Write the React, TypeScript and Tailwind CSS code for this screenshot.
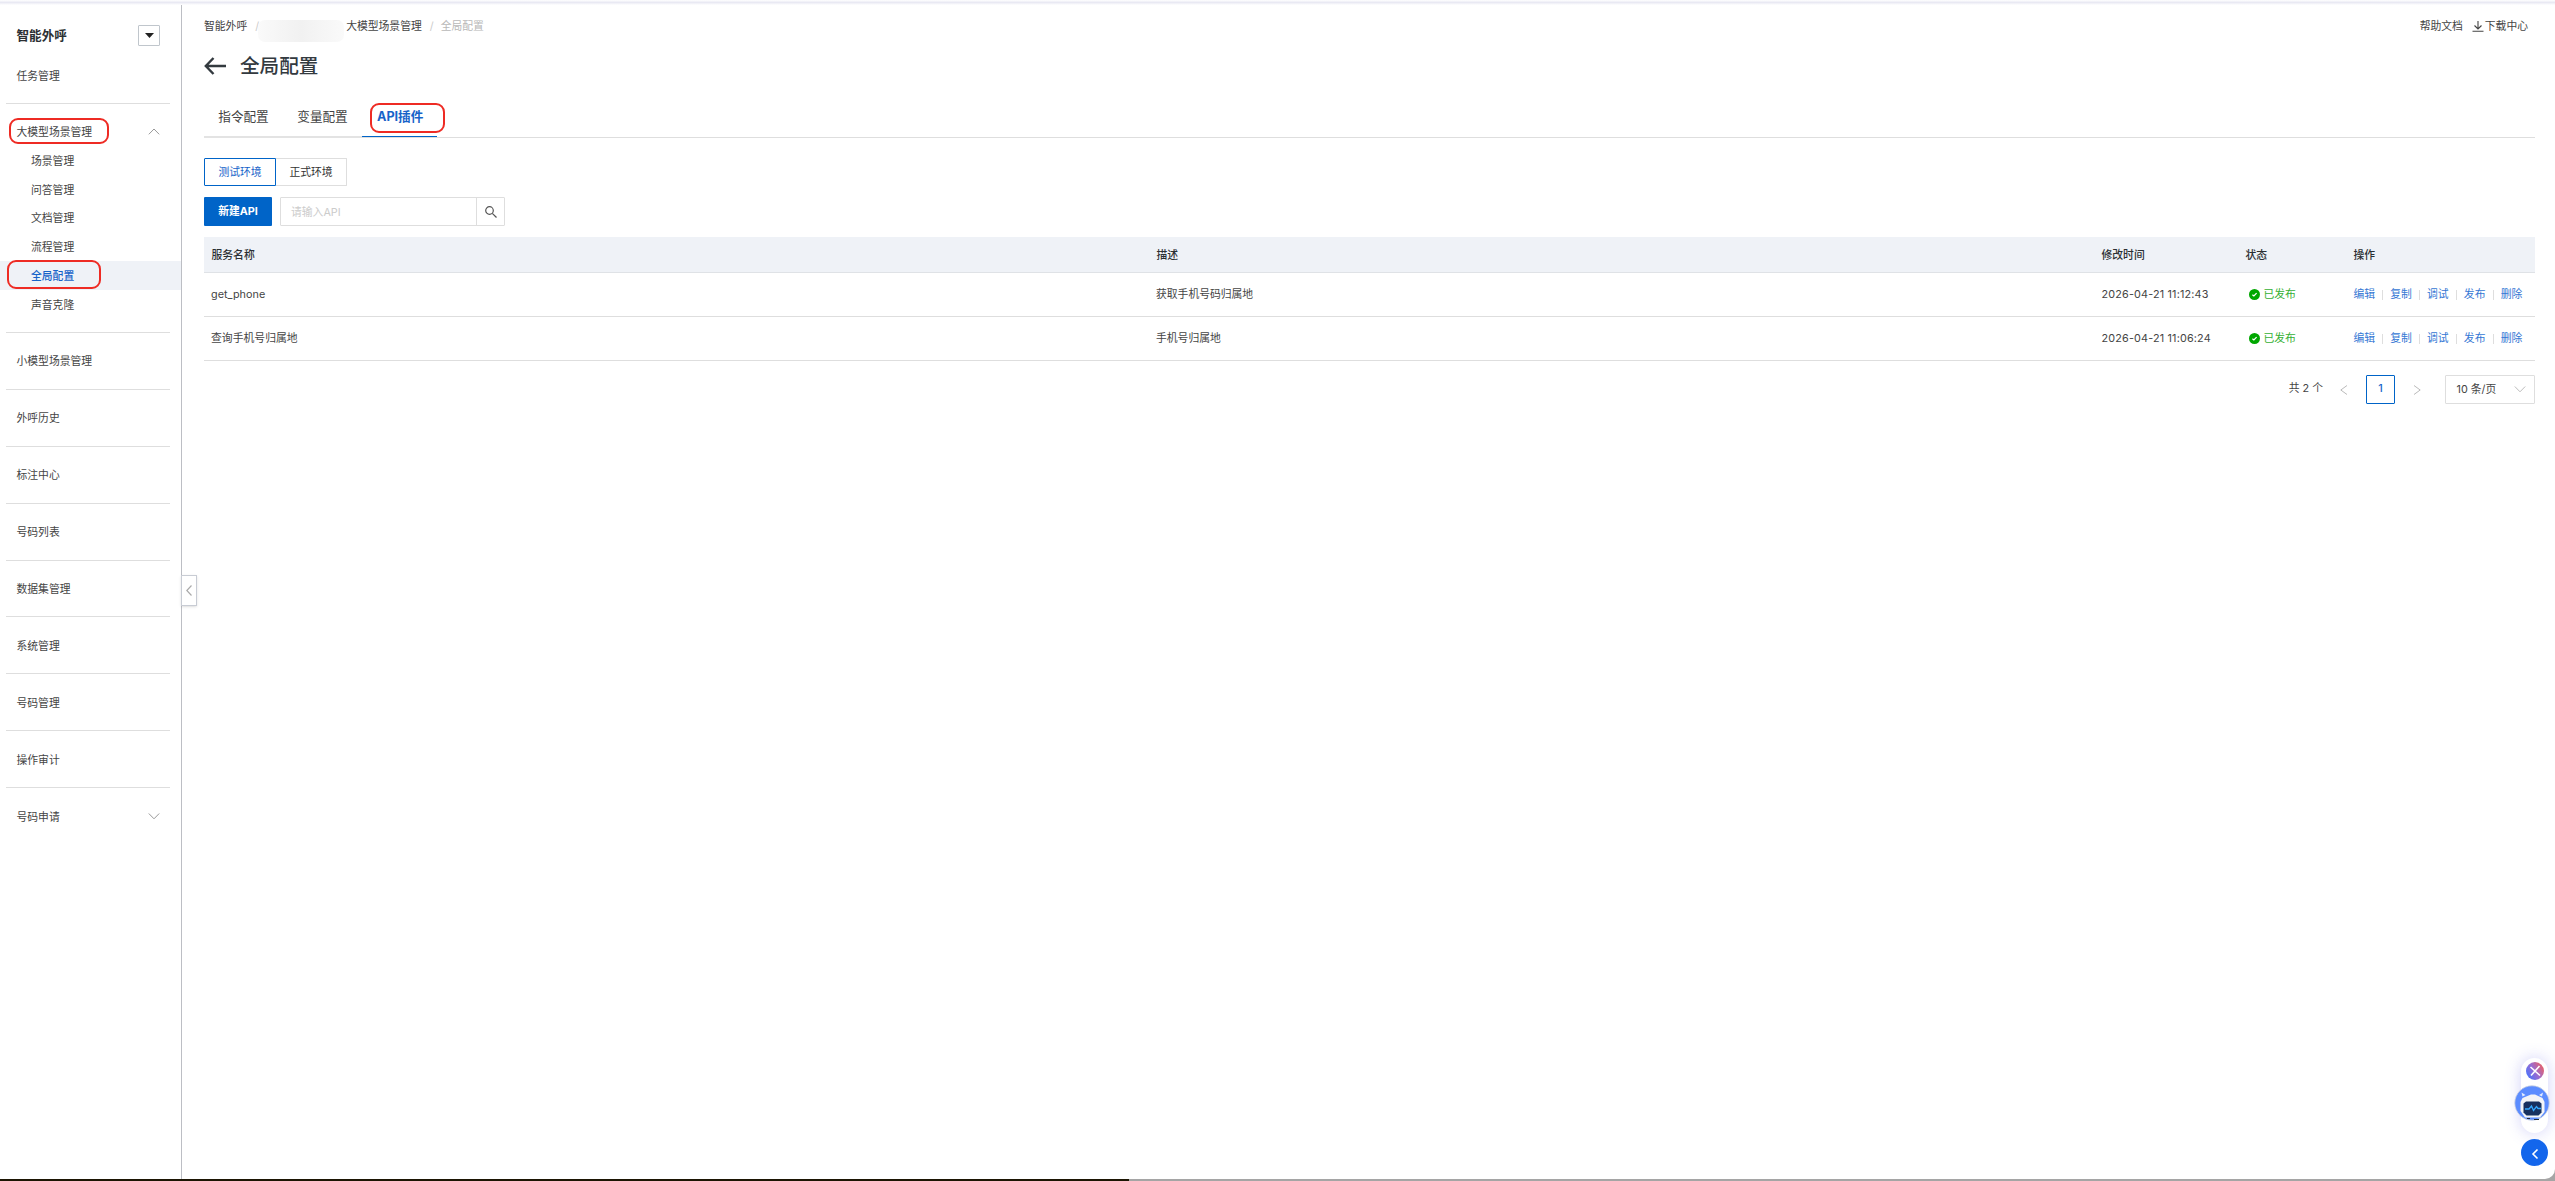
import React from 'react';

const llmItems = [
  { label: '场景管理' },
  { label: '问答管理' },
  { label: '文档管理' },
  { label: '流程管理' },
  { label: '全局配置', active: true },
  { label: '声音克隆' },
];

const menuItems = [
  '小模型场景管理',
  '外呼历史',
  '标注中心',
  '号码列表',
  '数据集管理',
  '系统管理',
  '号码管理',
  '操作审计',
  '号码申请',
];

const rows = [
  { name: 'get_phone', desc: '获取手机号码归属地', time: '2026-04-21 11:12:43' },
  { name: '查询手机号归属地', desc: '手机号归属地', time: '2026-04-21 11:06:24' },
];

const actions = ['编辑', '复制', '调试', '发布', '删除'];

const chevrons = {
  up: 'M.8 8.300 6 3l5.200 5.300',
  down: 'M.8 3.500 6 8.800l5.200-5.300',
  left: 'M9 1.500 2.800 6 9 10.500',
  right: 'M3 1.500 9.200 6 3 10.500',
};

const Chevron: React.FC<{ dir: keyof typeof chevrons; className?: string }> = ({ dir, className }) => (
  <svg className={className} width="12" height="12" viewBox="0 0 12 12" fill="none" stroke="currentColor" strokeWidth="1">
    <path d={chevrons[dir]} />
  </svg>
);

const Sidebar: React.FC = () => (
  <aside className="relative w-[182px] shrink-0 border-r border-[#bcbec4] text-[#444]">
    <div className="mt-[11px] flex h-[38px] items-center justify-between pl-[16.5px] pr-[21px]">
      <span className="pt-px text-[12.6px] font-bold text-[#2b2f33]">智能外呼</span>
      <button className="flex h-[21px] w-[22px] items-center justify-center rounded-[1px] border border-[#c0c6cc]">
        <svg width="9" height="5" viewBox="0 0 9 5">
          <path d="M0 0h9L4.500 5z" fill="#222" />
        </svg>
      </button>
    </div>
    <div className="mb-[7px] flex h-[42px] items-center pl-[16.5px] pt-[3px]">任务管理</div>
    <div className="ml-[6px] mr-[11px] border-t border-[#dedede]" />

    <div className="pt-[14px]">
      <div className="relative flex h-[28px] items-center justify-between pl-[16.5px] pr-[21px]">
        <span className="pt-[2px]">大模型场景管理</span>
        <Chevron dir="up" className="text-[#999]" />
        <div className="absolute left-[9px] top-0 h-[26px] w-[100px] rounded-[9px] border-2 border-[#ee2b24]" />
      </div>
      {llmItems.map((item) => (
        <div
          key={item.label}
          className={`relative flex h-[28.8px] items-center pl-[31px] pt-[3px] ${item.active ? 'bg-[#eff2f7] font-medium text-[#1763c9]' : ''}`}
        >
          {item.label}
          {item.active && (
            <div className="absolute left-[7px] top-[-1px] h-[29px] w-[94px] rounded-[9px] border-2 border-[#ee2b24]" />
          )}
        </div>
      ))}
    </div>

    <div className="pt-[13.2px]">
      {menuItems.map((label) => (
        <div
          key={label}
          className="ml-[6px] mr-[11px] flex h-[56.9px] items-center justify-between border-t border-[#dedede] pl-[10.5px] pr-[10px]"
        >
          <span className="pt-[3px]">{label}</span>
          {label === '号码申请' && <Chevron dir="down" className="text-[#999]" />}
        </div>
      ))}
    </div>

    {/* Collapse handle */}
    <button className="absolute left-[181px] top-[570px] flex h-[31px] w-[16px] items-center justify-center border border-[#c8ccd4] bg-white shadow">
      <svg width="6" height="11" viewBox="0 0 6 11" fill="none" stroke="#aaa" strokeWidth="1.2">
        <path d="M5.500.5.8 5.500l4.700 5" />
      </svg>
    </button>
  </aside>
);

const Status: React.FC = () => (
  <span className="flex items-center gap-[4px] pl-[3px] text-[#35b034]">
    <svg className="mb-[2px]" width="11" height="11" viewBox="0 0 11 11">
      <circle cx="5.500" cy="5.500" r="5.500" fill="#00a700" />
      <path d="M3.400 5.700l1.500 1.300 2.700-2.900" fill="none" stroke="#fff" strokeWidth="1.200" />
    </svg>
    已发布
  </span>
);

const Assistant: React.FC = () => (
  <div className="absolute bottom-[15px] right-[7px] flex w-[27px] flex-col items-center gap-[6px]">
    <div className="flex h-[75px] w-[27px] flex-col items-center rounded-full bg-white pt-[4px] shadow-[0_0_16px_rgba(90,90,230,0.28)]">
      <svg className="shrink-0" width="18" height="18" viewBox="0 0 18 18">
        <defs>
          <linearGradient id="closeFill" x1="0" y1="0.8" x2="1" y2="0.2">
            <stop offset="0" stopColor="#4474ff" />
            <stop offset="0.5" stopColor="#9a6cd0" />
            <stop offset="1" stopColor="#f0605e" />
          </linearGradient>
        </defs>
        <circle cx="9" cy="9" r="9" fill="url(#closeFill)" />
        <path d="M4.500 5 14 13.500M13.500 4 5 13.500" stroke="#fff" strokeWidth="1.600" />
      </svg>
      <svg className="mr-[5px] mt-[5px] shrink-0" width="36" height="36" viewBox="0 0 36 36">
        <circle cx="18" cy="18" r="17.200" fill="#5b8cff" stroke="#c9cfe0" strokeWidth="0.800" />
        <path d="M7.500 7.500 11.500 10l-3 1.500zM29 7.500 25 10l3 1.500z" fill="#e3ebff" />
        <path d="M17 9.500h4L28.500 13l2 4v10L26 32.500H11L6.500 26V17l2-4z" fill="#f3f4f7" />
        <path d="M12 16.500h13l2.500 2v9l-3 3h-12l-3-3v-9z" fill="#17305f" />
        <path d="M11 24h4l2.500-3 2 4.500 3-4 1.500 2h3" fill="none" stroke="#35a8ff" strokeWidth="1.300" />
        <path d="M13 33.500h3M20 34.500h5" stroke="#222b3a" strokeWidth="1" />
      </svg>
    </div>
    <button className="flex h-[27px] w-[27px] items-center justify-center rounded-full bg-[#1366ec]">
      <svg className="mt-[3px]" width="8" height="12" viewBox="0 0 8 12" fill="none" stroke="#fff" strokeWidth="1.600">
        <path d="M6.500 1.500 2 6l4.500 4.500" />
      </svg>
    </button>
  </div>
);

const App: React.FC = () => {
  return (
    <div className="relative flex h-[1181px] w-[2555px] flex-col overflow-hidden bg-[#a5a5a5] font-[Inter,'Noto_Sans_CJK_SC',sans-serif] text-[10.8px] leading-[16px] text-[#444]">
      <div className="h-[5px] shrink-0 bg-white bg-gradient-to-b from-white via-[#e9e9f3] to-white" />
      <div className="flex min-h-0 flex-1 rounded-br-[10px] bg-white">
        <Sidebar />
        <main className="min-w-0 flex-1 pl-[22px] pr-[20px]">
          {/* Breadcrumb */}
          <div className="flex h-[40px] items-center justify-between pr-[7px] pt-[3px]">
            <div className="flex items-center">
              <span>智能外呼</span>
              <span className="ml-[8px] w-[3px] text-[#ccc]">/</span>
              <span className="mt-[9px] h-[22px] w-[86px] rounded-[7px] bg-gradient-to-r from-[#fafafa] via-[#f1f1f1] to-[#fafafa]" />
              <span className="ml-[2px]">大模型场景管理</span>
              <span className="ml-[8px] mr-[7px] text-[#ccc]">/</span>
              <span className="text-[#b8b8b8]">全局配置</span>
            </div>
            <div className="flex items-center">
              <span>帮助文档</span>
              <svg className="mb-[2px] ml-[9px] mr-[1px]" width="12" height="12" viewBox="0 0 12 12" fill="none" stroke="#444" strokeWidth="1.1">
                <path d="M6 1v8M2.500 5.500 6 9l3.500-3.500M.5 11.300h11" />
              </svg>
              <span>下载中心</span>
            </div>
          </div>

          {/* Title */}
          <div className="flex h-[42px] items-center">
            <svg width="22" height="18" viewBox="0 0 22 18" fill="none" stroke="#333a3f" strokeWidth="2.4">
              <path d="M9.500 1 1.800 9l7.700 8M2 9h20" />
            </svg>
            <h1 className="ml-[14px] text-[19.6px] font-medium text-[#333a3f]">全局配置</h1>
          </div>

          {/* Tabs */}
          <div className="mt-[10px] flex h-[41px] border-b border-[#dedede] text-[12.6px]">
            <div className="flex h-[41px] w-[79px] items-center justify-center border-b-2 border-[#e3e3e3] pt-px">指令配置</div>
            <div className="flex h-[41px] w-[79px] items-center justify-center border-b-2 border-[#e3e3e3] pt-px">变量配置</div>
            <div className="relative flex h-[40px] w-[75px] items-center border-b border-[#0064c8] pl-[15px] pt-px font-bold text-[#1763c9]">
              API插件
              <div className="absolute left-[8px] top-[6px] h-[30px] w-[75px] rounded-[9px] border-2 border-[#ee2b24]" />
            </div>
          </div>

          {/* Environment */}
          <div className="mt-[20px] flex h-[28px]">
            <button className="w-[72px] rounded-l-[1px] border border-[#0064c8] pt-[2px] text-[#1763c9]">测试环境</button>
            <button className="w-[71px] rounded-r-[1px] border border-l-0 border-[#dedede] pt-[2px] text-[#333]">正式环境</button>
          </div>

          <div className="mt-[11px] flex h-[29px]">
            <button className="w-[68px] rounded-[1px] bg-[#0064c8] font-bold text-white">新建API</button>
            <div className="ml-[8px] flex w-[225px] rounded-[1px] border border-[#dedede]">
              <div className="flex flex-1 items-center pl-[10px] pt-[3px] text-[#ccc]">请输入API</div>
              <div className="flex w-[28px] items-center justify-center border-l border-[#dedede]">
                <svg width="12" height="12" viewBox="0 0 12 12" fill="none" stroke="#555" strokeWidth="1.2">
                  <circle cx="4.500" cy="4.500" r="3.800" />
                  <path d="M7.300 7.300 11.500 11.500" />
                </svg>
              </div>
            </div>
          </div>

          {/* Table */}
          <table className="mt-[11px] w-full table-fixed border-collapse text-left">
            <colgroup>
              <col className="w-[945px]" />
              <col className="w-[945px]" />
              <col className="w-[144px]" />
              <col className="w-[108px]" />
              <col />
            </colgroup>
            <thead>
              <tr className="h-[35px] border-b border-[#dfe2e6] bg-[#eff2f7] text-[#2b2f33]">
                {['服务名称', '描述', '修改时间', '状态', '操作'].map((head) => (
                  <th key={head} className="pl-[7.5px] pt-[3px] font-medium">{head}</th>
                ))}
              </tr>
            </thead>
            <tbody>
              {rows.map((row) => (
                <tr key={row.name} className="h-[44px] border-b border-[#dedede]">
                  <td className="pl-[7px] pt-[2px] tracking-[0.04px]">{row.name}</td>
                  <td className="pl-[7px] pt-[2px]">{row.desc}</td>
                  <td className="pl-[7.5px] pt-[2px] tracking-[0.18px]">{row.time}</td>
                  <td className="pl-[7.5px] pt-[2px]"><Status /></td>
                  <td className="pl-[7.5px] pt-[2px]">
                    <div className="flex items-center text-[#3577d4]">
                      {actions.map((action, index) => (
                        <React.Fragment key={action}>
                          {index > 0 && <span className="mx-[7.1px] h-[10px] w-px bg-[#dedede]" />}
                          <span>{action}</span>
                        </React.Fragment>
                      ))}
                    </div>
                  </td>
                </tr>
              ))}
            </tbody>
          </table>

          {/* Pagination */}
          <div className="mt-[14px] flex h-[29px] items-center justify-end">
            <span>共 2 个</span>
            <Chevron dir="left" className="ml-[15px] mt-[2px] text-[#bbb]" />
            <button className="ml-[16px] h-[29px] w-[29px] rounded-[1px] border border-[#0064c8] font-medium text-[#1763c9]">1</button>
            <Chevron dir="right" className="ml-[16px] mt-[2px] text-[#bbb]" />
            <div className="ml-[22px] flex h-[29px] w-[90px] items-center justify-between rounded-[1px] border border-[#dedede] pl-[10.5px] pr-[8px]">
              <span className="pt-px">10 条/页</span>
              <Chevron dir="down" className="text-[#bbb]" />
            </div>
          </div>
        </main>
      </div>
      <div className="flex h-[2px] shrink-0">
        <div className="w-[1129px] bg-[#1c1503]" />
        <div className="flex-1 bg-[#a5a5a5]" />
      </div>
      <Assistant />
    </div>
  );
};

export default App;
